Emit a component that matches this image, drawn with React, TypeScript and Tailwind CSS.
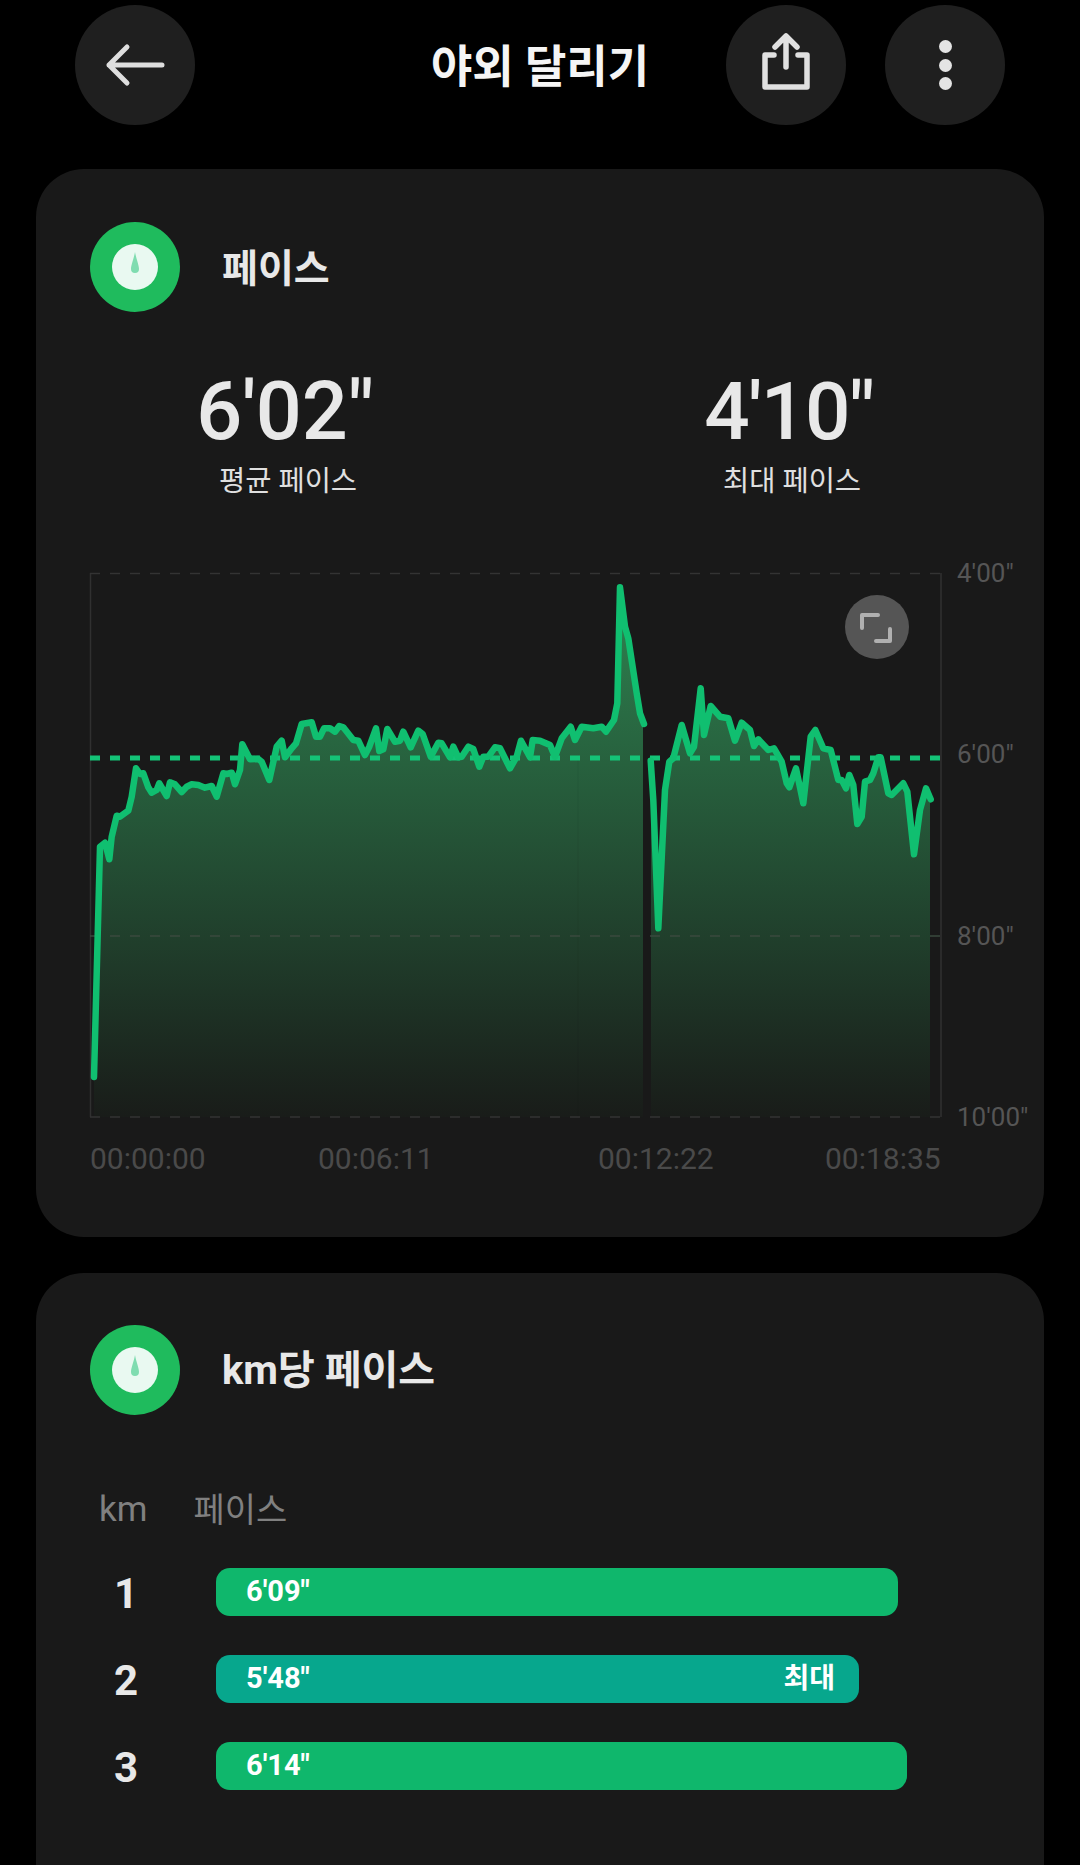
const RAW_A = [
  [120, 890], [135, 878], [148, 928], [155, 860], [170, 797], [180, 800], [205, 782], [215, 740], [228, 655], [240, 672],
  [250, 670], [265, 712], [275, 728], [290, 720], [298, 700], [320, 738], [330, 697], [345, 703], [365, 726], [380, 710],
  [395, 703], [415, 705], [435, 713], [455, 708], [470, 740], [490, 670], [500, 672], [515, 668], [525, 703], [540, 660],
  [547, 583], [570, 628], [595, 627], [605, 635], [628, 690], [650, 590], [665, 572], [675, 622], [695, 595], [708, 580],
  [725, 522], [755, 517], [768, 560], [780, 560], [792, 535], [810, 535], [825, 545], [838, 528], [850, 532], [880, 570],
  [895, 572], [915, 615], [928, 590], [948, 535], [958, 603], [970, 598], [982, 537], [1005, 575], [1020, 572], [1030, 545],
  [1052, 592], [1075, 542], [1088, 552], [1112, 620], [1135, 578], [1145, 580], [1170, 622], [1180, 590], [1195, 622], [1205, 620],
  [1225, 590], [1240, 597], [1258, 650], [1270, 620], [1285, 620], [1305, 592], [1320, 595], [1350, 655], [1370, 620], [1383, 572],
  [1410, 622], [1418, 570],
];

const RAW_B = [
  [0, 572], [30, 585], [45, 620], [65, 565], [92, 530], [105, 570], [125, 530], [160, 535], [185, 530], [198, 545],
  [222, 510], [232, 460], [240, 112], [255, 230], [265, 265], [290, 430], [300, 490], [312, 522],
];

const RAW_C = [
  [332, 632], [340, 750], [355, 1135], [375, 720], [388, 635], [400, 625], [425, 525], [450, 610], [462, 590], [482, 415],
  [492, 555], [512, 468], [540, 500], [565, 505], [585, 572], [605, 518], [630, 540], [642, 588], [655, 568], [685, 600],
  [702, 595], [725, 635], [740, 700], [748, 712], [768, 655], [790, 760], [812, 560], [826, 540], [850, 595], [872, 600],
  [895, 690], [905, 690], [918, 715], [928, 675], [940, 705], [952, 822], [965, 800], [975, 695], [990, 690], [1000, 670],
  [1015, 622], [1022, 622], [1045, 730], [1055, 735], [1090, 700], [1102, 725], [1122, 913], [1140, 780], [1158, 715], [1172, 748],
];

// 크롭 좌표를 페이지 좌표로 변환
const seg1 = [
  [94, 1077],
  ...RAW_A.map(([x, y]) => [60 + x / 3, 550 + y / 3]),
  ...RAW_B.map(([x, y]) => [540 + x / 3, 550 + y / 3]),
];
const seg2 = RAW_C.map(([x, y]) => [540 + x / 3, 550 + y / 3]);

const toLine = (pts: number[][]) => pts.map(([x, y], i) => `${i ? "L" : "M"}${x.toFixed(1)} ${y.toFixed(1)}`).join(" ");

const toArea = (pts: number[][], left: number, right: number) =>
  `M${left} 1117 L${left} ${pts[0][1].toFixed(1)} ` +
  pts.map(([x, y]) => `L${x.toFixed(1)} ${y.toFixed(1)}`).join(" ") +
  ` L${right} ${pts[pts.length - 1][1].toFixed(1)} L${right} 1117 Z`;

function PaceIcon() {
  return (
    <div className="flex h-[90px] w-[90px] shrink-0 items-center justify-center rounded-full bg-[#1fbb5d]">
      <svg width="46" height="46" viewBox="0 0 46 46">
        <circle cx="23" cy="23" r="23" fill="#e9f9f1" />
        <path d="M23 8 C24 14 27 21 27 25 A4 4 0 0 1 19 25 C19 21 22 14 23 8 Z" fill="#7fdcb0" />
      </svg>
    </div>
  );
}

function RoundButton({ children }: { children: React.ReactNode }) {
  return <div className="flex h-[120px] w-[120px] items-center justify-center rounded-full bg-[#1f1f1f]">{children}</div>;
}

function PaceChart() {
  return (
    <svg width="856" height="550" viewBox="88 570 856 550" className="block shrink-0">
      <defs>
        <linearGradient id="paceFill" gradientUnits="userSpaceOnUse" x1="0" y1="590" x2="0" y2="1117">
          <stop offset="0" stopColor="#2e8350" />
          <stop offset="1" stopColor="#191c19" />
        </linearGradient>
      </defs>
      <path d={toArea(seg1, 94, 643)} fill="url(#paceFill)" />
      <path d={toArea(seg2, 651, 930)} fill="url(#paceFill)" />
      <line x1="578" y1="760" x2="578" y2="1117" stroke="#000" strokeOpacity="0.06" strokeWidth="1" />
      <line x1="90.5" y1="573" x2="90.5" y2="1117" stroke="#303030" strokeWidth="1.5" />
      <line x1="941" y1="573" x2="941" y2="1117" stroke="#303030" strokeWidth="1.5" />
      <line x1="90" y1="573.5" x2="941" y2="573.5" stroke="#333" strokeWidth="1.5" strokeDasharray="10 10" />
      <line x1="90" y1="936" x2="941" y2="936" stroke="#3a4a3e" strokeWidth="1.5" strokeDasharray="10 10" />
      <line x1="90" y1="1117" x2="941" y2="1117" stroke="#333" strokeWidth="1.5" strokeDasharray="10 10" />
      <line x1="90" y1="758" x2="941" y2="758" stroke="#14c377" strokeWidth="5" strokeDasharray="10 10" />
      <path d={toLine(seg1)} fill="none" stroke="#10bf70" strokeWidth="6.5" strokeLinejoin="round" strokeLinecap="round" />
      <path d={toLine(seg2)} fill="none" stroke="#10bf70" strokeWidth="6.5" strokeLinejoin="round" strokeLinecap="round" />
      <circle cx="877" cy="627" r="32" fill="#555555" />
      <path d="M862 628 V615 H878 M890 629 V641 H876" fill="none" stroke="#b0b0b0" strokeWidth="4" strokeLinecap="round" strokeLinejoin="round" />
    </svg>
  );
}

const kmRows = [
  { km: "1", pace: "6'09\"", width: "w-[682px]", color: "bg-[#0fb76c]", best: false },
  { km: "2", pace: "5'48\"", width: "w-[643px]", color: "bg-[#07a78d]", best: true },
  { km: "3", pace: "6'14\"", width: "w-[691px]", color: "bg-[#0fb76c]", best: false },
];

export default function App() {
  return (
    <div className="h-[1865px] overflow-hidden bg-black font-['Roboto','Noto_Sans_CJK_KR',sans-serif] text-[#e8e8e8]">
      <header className="grid h-[169px] grid-cols-[1fr_auto_1fr] items-start px-[75px] pt-[5px]">
        <RoundButton>
          <svg width="60" height="44" viewBox="0 0 60 44" fill="none" stroke="#dedede" strokeWidth="5" strokeLinecap="round" strokeLinejoin="round">
            <path d="M4 22 H57 M22 4 L4 22 L22 40" />
          </svg>
        </RoundButton>
        <h1 className="h-[120px] pt-[3px] text-[45px] leading-[120px] font-bold text-[#f5f5f5]">야외 달리기</h1>
        <div className="flex justify-end gap-[39px]">
          <RoundButton>
            <svg width="54" height="64" viewBox="0 0 54 64" fill="none" stroke="#e0e0e0" strokeWidth="5.5" strokeLinejoin="round" strokeLinecap="round">
              <path d="M15 22 H6 V54 H48 V22 H39" />
              <path d="M27 34 V4 M16 14 L27 3 L38 14" />
            </svg>
          </RoundButton>
          <RoundButton>
            <div className="flex flex-col gap-[5.5px]">
              <div className="h-[13px] w-[13px] rounded-full bg-[#e4e4e4]" />
              <div className="h-[13px] w-[13px] rounded-full bg-[#e4e4e4]" />
              <div className="h-[13px] w-[13px] rounded-full bg-[#e4e4e4]" />
            </div>
          </RoundButton>
        </div>
      </header>

      <section className="mx-[36px] h-[1068px] rounded-[48px] bg-[#191919]">
        <div className="flex items-center gap-[42px] pt-[53px] pl-[54px]">
          <PaceIcon />
          <h2 className="pt-[3px] text-[39px] leading-[50px] font-bold">페이스</h2>
        </div>

        <div className="mt-[58px] grid grid-cols-2 text-center">
          <div>
            <div className="pr-[6px] text-[81px] leading-[84px] font-medium">6'02"</div>
            <div className="mt-[10px] text-[28.5px] leading-[36px] text-[#e0e0e0]">평균 페이스</div>
          </div>
          <div>
            <div className="pr-[6px] text-[80px] leading-[84px] font-medium tracking-[-1.2px]">4'10"</div>
            <div className="mt-[10px] text-[28.5px] leading-[36px] text-[#e0e0e0]">최대 페이스</div>
          </div>
        </div>

        <div className="mt-[70px] ml-[52px] flex items-start">
          <PaceChart />
          <div className="mt-[-12px] ml-[13px] flex h-[574px] flex-col justify-between text-[26px] leading-[30px] text-[#555555]">
            <span>4'00"</span>
            <span>6'00"</span>
            <span>8'00"</span>
            <span>10'00"</span>
          </div>
        </div>

        <div className="mt-[9px] ml-[54px] flex text-[30px] leading-[36px] text-[#4a4a4a]">
          <span className="w-[115px]">00:00:00</span>
          <span className="ml-[113px] w-[115px]">00:06:11</span>
          <span className="ml-[165px] w-[115px]">00:12:22</span>
          <span className="ml-[112px] w-[115px]">00:18:35</span>
        </div>
      </section>

      <section className="mx-[36px] mt-[36px] h-[640px] rounded-[48px] bg-[#191919]">
        <div className="flex items-center gap-[42px] pt-[52px] pl-[54px]">
          <PaceIcon />
          <h2 className="pt-[2px] text-[40px] leading-[50px] font-bold">km당 페이스</h2>
        </div>

        <div className="mt-[73px] flex items-center pl-[63px] text-[#808080]">
          <span className="text-[35px] leading-[44px]">km</span>
          <span className="ml-[46px] text-[34px] leading-[44px]">페이스</span>
        </div>

        <div className="mt-[36px] flex flex-col gap-[39px]">
          {kmRows.map((row) => (
            <div key={row.km} className="flex items-center pl-[54px]">
              <span className="h-[48px] w-[72px] text-center text-[42px] leading-[52px] font-bold">{row.km}</span>
              <div className={`ml-[54px] flex h-[48px] items-center justify-between rounded-[14px] pr-[24px] pl-[30px] text-[29px] font-bold text-white ${row.width} ${row.color}`}>
                <span>{row.pace}</span>
                {row.best && <span className="text-[28px]">최대</span>}
              </div>
            </div>
          ))}
        </div>
      </section>
    </div>
  );
}
